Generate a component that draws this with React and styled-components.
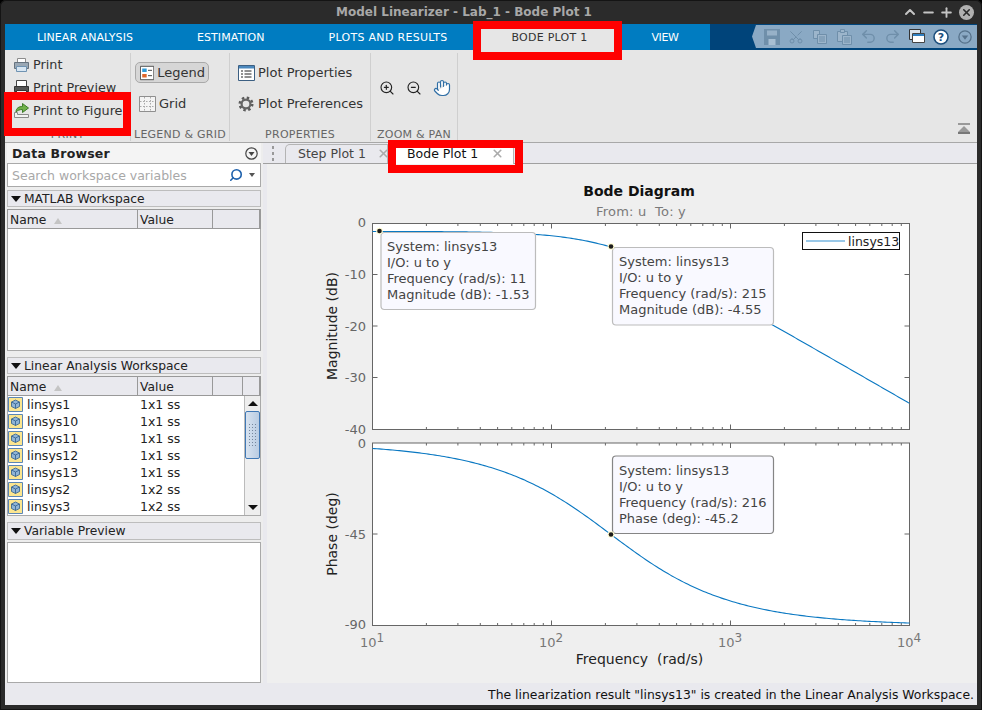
import React from 'react';
import styled, { createGlobalStyle } from 'styled-components';
import { Scissors, Undo2, Redo2, ZoomIn, ZoomOut, Hand, X, ChevronUp, Minus, Plus, Search } from 'lucide-react';

const Global = createGlobalStyle`
  html, body { margin: 0; padding: 0; background: #000; }
  body { font-family: "DejaVu Sans", sans-serif; }
  #root { width: 982px; height: 710px; overflow: hidden; }
`;

const Win = styled.div`
  position: relative;
  width: 982px;
  height: 710px;
  box-sizing: border-box;
  padding: 0 5px 5px;
  background: #2b2b2b;
  border-radius: 6px 6px 0 0;
  box-shadow: inset 0 0 0 1px #141414;
  display: flex;
  flex-direction: column;
  overflow: hidden;
`;
const TitleBar = styled.div`
  height: 24px;
  display: flex;
  align-items: center;
  justify-content: center;
  position: relative;
  color: #a8a8a8;
  font-weight: 700;
  font-size: 12px;
  padding-right: 54px;
`;
const WinControls = styled.div`
  position: absolute;
  right: 3px;
  top: 4px;
  display: flex;
  align-items: center;
  gap: 3px;
  color: #c4c4c4;
`;
const CloseDot = styled.span`
  width: 15px;
  height: 15px;
  border-radius: 50%;
  background: #b0b0b0;
  color: #2b2b2b;
  display: flex;
  align-items: center;
  justify-content: center;
  margin-left: 2px;
`;
const TabBar = styled.div`
  height: 26px;
  display: flex;
  background: #00447a;
`;
const Tab = styled.div`
  height: 100%;
  padding: 0 32px;
  display: flex;
  align-items: center;
  font-size: 11px;
  letter-spacing: ${p => p.$ls ?? 0.06}px;
  white-space: nowrap;
  background: ${p => (p.$active ? '#e6e6e6' : '#007cc1')};
  color: ${p => (p.$active ? '#333' : '#fff')};
`;
const QatSpacer = styled.div`flex: 1;`;
const Qat = styled.div`
  width: 225px;
  margin: 1px 0 2px;
  box-sizing: border-box;
  padding-left: 8px;
  display: flex;
  align-items: center;
  background: #8aa9c4;
  clip-path: polygon(4px 0, 100% 0, 100% 100%, 4px 100%, 0 50%);
`;
const QatCell = styled.span`
  width: 24.3px;
  height: 23px;
  display: flex;
  align-items: center;
  justify-content: center;
  color: #6f8faa;
`;
const Ribbon = styled.div`
  height: 93px;
  box-sizing: border-box;
  display: flex;
  background: #e6e6e6;
  border-bottom: 1px solid #a8a8a8;
  color: #333;
`;
const Group = styled.div`
  width: ${p => p.$w}px;
  flex: ${p => (p.$grow ? 1 : 'none')};
  box-sizing: border-box;
  margin: 3px 0 1px;
  border-right: ${p => (p.$grow ? 0 : '1px solid #cfcfcf')};
  display: flex;
  flex-direction: column;
`;
const GroupBody = styled.div`
  flex: 1;
  display: flex;
  flex-direction: ${p => (p.$row ? 'row' : 'column')};
  align-items: ${p => (p.$row ? 'center' : 'flex-start')};
  padding: ${p => p.$pad};
  gap: ${p => p.$gap || 0}px;
`;
const GroupLabel = styled.div`
  height: 13px;
  line-height: 13px;
  text-align: center;
  font-size: 11px;
  letter-spacing: 0.25px;
  color: #666;
  white-space: nowrap;
`;
const RibbonItem = styled.div`
  display: flex;
  align-items: center;
  height: ${p => p.$h || 23}px;
  gap: ${p => p.$gap || 3}px;
  padding-left: ${p => p.$left || 0}px;
  font-size: ${p => p.$fs || 13}px;
  white-space: nowrap;
`;
const ToggleItem = styled(RibbonItem)`
  height: 21px;
  box-sizing: border-box;
  padding: 0 3px 0 4px;
  width: 74px;
  background: #d6d6d6;
  border: 1px solid #a9a9a9;
  border-radius: 5px;
`;
const Collapse = styled.div`
  flex: 1;
  display: flex;
  justify-content: flex-end;
  align-items: flex-end;
  padding: 0 7px 7px 0;
`;
const Body = styled.div`
  flex: 1;
  min-height: 0;
  display: flex;
  background: #e9e9ee;
`;
const Left = styled.div`
  width: 258px;
  box-sizing: border-box;
  padding: 0 2px;
  display: flex;
  flex-direction: column;
  background: #ededed;
  color: #222;
`;
const BrowserHead = styled.div`
  height: 20px;
  display: flex;
  align-items: center;
  justify-content: space-between;
  padding: 0 3px 0 5px;
  background: #f4f4f4;
  font-weight: 700;
  font-size: 12.5px;
  letter-spacing: 0.2px;
`;
const SearchBox = styled.div`
  height: 24px;
  box-sizing: border-box;
  display: flex;
  align-items: center;
  padding: 0 4px;
  background: #fff;
  border: 1px solid #a9a9a9;
  color: #a8a8a8;
  font-size: 12.5px;
  margin-bottom: 3px;
`;
const SearchGlyph = styled(Search)`
  margin-left: auto;
  margin-right: 6px;
  transform: scaleX(-1);
`;
const SearchDrop = styled.span`
  width: 0;
  height: 0;
  margin-right: 1px;
  border-left: 3px solid transparent;
  border-right: 3px solid transparent;
  border-top: 4px solid #555;
`;
const SectionHead = styled.div`
  height: ${p => p.$h}px;
  box-sizing: border-box;
  display: flex;
  align-items: center;
  gap: 3px;
  padding-left: 2px;
  background: #e9e9ee;
  border: 1px solid #bdbdbd;
  font-size: 12.3px;
  margin-bottom: 2px;
`;
const Tri = styled.span`
  width: 0;
  height: 0;
  border-left: 5px solid transparent;
  border-right: 5px solid transparent;
  border-top: 6px solid #111;
  margin-left: 1px;
`;
const TableHead = styled.div`
  height: 20px;
  flex: none;
  display: grid;
  grid-template-columns: 130px 75px 1fr ${p => (p.$scroll ? '16px' : '')};
  background: #e9e9ee;
  font-size: 12.3px;
  box-sizing: border-box;
  border: 1px solid #999;
  border-width: 1px 2px 1px 1px;
`;
const HeadCell = styled.div`
  display: flex;
  align-items: center;
  gap: 8px;
  padding: 1px 0 0 2px;
  border-right: 1px solid #999;
  &:last-child { border-right: 0; }
`;
const SortMark = styled.span`
  width: 0;
  height: 0;
  border-left: 4px solid transparent;
  border-right: 4px solid transparent;
  border-bottom: 6px solid #c4c4c4;
  margin-top: 2px;
`;
const EmptyBody = styled.div`
  height: ${p => p.$h}px;
  box-sizing: border-box;
  background: #fff;
  border: 1px solid #a9a9a9;
  border-top-width: ${p => (p.$top ? 1 : 0)}px;
  margin-bottom: ${p => p.$mb || 0}px;
`;
const ListWrap = styled.div`
  height: 120px;
  box-sizing: border-box;
  display: flex;
  background: #fff;
  border-left: 1px solid #a9a9a9;
  border-right: 1px solid #a9a9a9;
  border-bottom: 1px solid #a9a9a9;
  margin-bottom: 6px;
`;
const RowList = styled.div`
  flex: 1;
  overflow: hidden;
`;
const Row = styled.div`
  height: 17px;
  display: grid;
  grid-template-columns: 130px 1fr;
  align-items: center;
  font-size: 12.5px;
`;
const NameCell = styled.span`
  display: flex;
  align-items: center;
  gap: 4px;
`;
const ValueCell = styled.span`
  padding-left: 2px;
`;
const Scroll = styled.div`
  width: 15px;
  flex: none;
  display: flex;
  flex-direction: column;
  background: #efefef;
  border-left: 1px solid #bbb;
`;
const ScrollBtn = styled.div`
  height: 15px;
  flex: none;
  display: flex;
  align-items: center;
  justify-content: center;
  background: #eee;
`;
const Arrow = styled.span`
  width: 0;
  height: 0;
  border-left: 5px solid transparent;
  border-right: 5px solid transparent;
  ${p => (p.$down ? 'border-top: 5px solid #111;' : 'border-bottom: 5px solid #111;')}
`;
const Thumb = styled.div`
  height: 48px;
  flex: none;
  box-sizing: border-box;
  display: flex;
  align-items: center;
  justify-content: center;
  border: 1px solid #3f78b5;
  border-radius: 2px;
  background: linear-gradient(90deg, #d8e3f0, #b9cce2);
`;
const ThumbDots = styled.span`
  width: 10px;
  height: 24px;
  background-image: radial-gradient(#75879d 0.8px, transparent 1px);
  background-size: 3px 3px;
`;
const Track = styled.div`flex: 1;`;
const Right = styled.div`
  flex: 1;
  min-width: 0;
  display: flex;
  flex-direction: column;
`;
const TabStrip = styled.div`
  height: 21px;
  flex: none;
  box-sizing: border-box;
  display: flex;
  align-items: flex-end;
  background: #e9e9ee;
  border-bottom: 1px solid #a0a0a0;
  font-size: 12.5px;
`;
const Grip = styled.div`
  width: 24px;
  height: 100%;
  display: flex;
  flex-direction: column;
  align-items: center;
  justify-content: center;
  gap: 3px;
  margin-left: -2px;
  span { width: 2px; height: 3px; background: #999; }
`;
const DocTab = styled.div`
  width: ${p => p.$w}px;
  height: ${p => (p.$on ? 20 : 19)}px;
  box-sizing: border-box;
  display: flex;
  align-items: center;
  justify-content: space-between;
  padding: ${p => p.$pad};
  border: 1px solid #b4b4b4;
  border-bottom: 0;
  border-left-width: ${p => (p.$on ? 0 : 1)}px;
  border-radius: ${p => (p.$on ? '0 5px 0 0' : '5px 0 0 0')};
  margin-bottom: ${p => (p.$on ? -1 : 0)}px;
  background: ${p => (p.$on ? '#fff' : '#e9e9ee')};
  color: ${p => (p.$on ? '#111' : '#444')};
  white-space: nowrap;
`;
const TabClose = styled(X)`
  margin-right: ${p => p.$mr || 0}px;
  flex: none;
`;
const PlotArea = styled.div`
  flex: 1;
  min-height: 0;
  margin-left: 4px;
  background: #efefef;
`;
const PlotSvg = styled.svg`
  display: block;
  font-family: "DejaVu Sans", sans-serif;
`;
const Status = styled.div`
  height: 22px;
  flex: none;
  display: flex;
  align-items: center;
  justify-content: flex-end;
  padding-right: 3px;
  background: #e9e9ee;
  color: #111;
  font-size: 12.4px;
  white-space: nowrap;
`;
const Highlight = styled.div`
  position: absolute;
  left: ${p => p.$x}px;
  top: ${p => p.$y}px;
  width: ${p => p.$w}px;
  height: ${p => p.$h}px;
  box-sizing: border-box;
  border: 8px solid #f00;
  pointer-events: none;
`;

/* ---------- icons ---------- */
const PrintIcon = () => (
  <svg width="17" height="16" viewBox="0 0 17 16">
    <path d="M4.500 1.500h8v4h-8z" fill="#fff" stroke="#8c8c8c" />
    <path d="M1.500 5.500h14v6h-14z" fill="#9aa8b5" stroke="#66737f" />
    <path d="M3.500 9.500h10v5h-10z" fill="#d8e6f2" stroke="#6f93b2" />
  </svg>
);
const PreviewIcon = () => (
  <svg width="17" height="16" viewBox="0 0 17 16">
    <path d="M3.500 .5h10v6h-10z" fill="#fff" stroke="#444" />
    <path d="M1.500 6.500h14v5h-14z" fill="#555" stroke="#333" />
    <path d="M3.500 10.500h10v4h-10z" fill="#eee" stroke="#333" />
  </svg>
);
const FigureIcon = () => (
  <svg width="17" height="17" viewBox="0 0 17 17">
    <path d="M1.500 10.500v5h14v-3h-11v-2z" fill="#f2f2f2" stroke="#8a8a8a" />
    <path d="M3 10C3 6 6 4.500 9.500 4.500V1.500L15.500 6 9.500 10.500V7.500C6.500 7.500 4.500 8.500 3 10z" fill="#6fb04a" stroke="#3f7d2a" />
  </svg>
);
const LegendIcon = () => (
  <svg width="16" height="16" viewBox="0 0 16 16">
    <path d="M.5.5h15v15H.5z" fill="#fff" stroke="#444" />
    <path d="M2.500 3h5v4h-5z" fill="#2f9bd8" />
    <path d="M2.500 9h5v4h-5z" fill="#e0662a" />
    <path d="M9 5h4.500M9 11h4.500" stroke="#333" />
  </svg>
);
const GridIcon = () => (
  <svg width="17" height="16" viewBox="0 0 17 16">
    <path d="M.5.5h16v15H.5z" fill="#f4f4f4" stroke="#8f8f8f" />
    <path d="M5.500 1v14M11.500 1v14M1 5.500h15M1 10.500h15" stroke="#aaa" strokeDasharray="1.500 1.500" />
  </svg>
);
const PropsIcon = () => (
  <svg width="17" height="16" viewBox="0 0 17 16">
    <path d="M.5.5h16v15H.5z" fill="#fff" stroke="#3c5f82" />
    <path d="M1 1h15v2.500H1z" fill="#4b88bd" />
    <path d="M3 6h2M3 9h2M3 12h2M6.500 6h7M6.500 9h7M6.500 12h7" stroke="#222" />
  </svg>
);
const GearIcon = () => (
  <svg width="16" height="16" viewBox="0 0 16 16">
    <circle cx="8" cy="8" r="6.200" fill="none" stroke="#5c5c5c" strokeWidth="2.600" strokeDasharray="2.400 2.470" />
    <circle cx="8" cy="8" r="4.400" fill="none" stroke="#666" strokeWidth="2.200" />
  </svg>
);
const CollapseIcon = () => (
  <svg width="12" height="11" viewBox="0 0 12 11">
    <path d="M0 0h12v2H0z" fill="#999" />
    <path d="M6 3l6 6H0z" fill="#999" />
    <path d="M0 9h12v2H0z" fill="#777" />
  </svg>
);
const SaveIcon = () => (
  <svg width="16" height="16" viewBox="0 0 16 16">
    <path d="M0 0h16v16H0z" fill="#6f8faa" />
    <path d="M3 1.500h10v5H3z" fill="#97b1c8" />
    <path d="M4.500 10h7v6h-7z" fill="#a8bfd3" />
  </svg>
);
const CopyIcon = () => (
  <svg width="14" height="14" viewBox="0 0 14 14" fill="#9cb5cb" stroke="#6f8faa">
    <path d="M.5.5h6v8h-6z" />
    <path d="M4.500 4.500h9v9h-9z" />
    <path d="M6 7h6M6 9h6M6 11h6" fill="none" />
  </svg>
);
const PasteIcon = () => (
  <svg width="15" height="16" viewBox="0 0 15 16" fill="#9cb5cb" stroke="#6f8faa">
    <path d="M.5 2.500h10v10H.5z" />
    <path d="M3.500.5h4v3h-4z" />
    <path d="M5.500 6.500h9v9h-9z" />
    <path d="M7 9h6M7 11h6M7 13h6" fill="none" />
  </svg>
);
const WindowsIcon = () => (
  <svg width="16" height="16" viewBox="0 0 16 16">
    <path d="M.5 .5h11v10H.5z" fill="#dce4ec" stroke="#333" />
    <path d="M3.500 4.500h12v9h-12z" fill="#fff" stroke="#444" />
    <path d="M4 5h11v2H4z" fill="#2f7fc0" />
  </svg>
);
const HelpIcon = () => (
  <svg width="16" height="16" viewBox="0 0 16 16">
    <circle cx="8" cy="8" r="7" fill="#fff" stroke="#1d4f7d" strokeWidth="1.600" />
    <text x="8" y="12" textAnchor="middle" fontSize="11" fontWeight="700" fontFamily="DejaVu Sans, sans-serif" fill="#1d4f7d">?</text>
  </svg>
);
const DropCircle = ({ c, s = 13 }) => (
  <svg width={s} height={s} viewBox="0 0 13 13">
    <circle cx="6.500" cy="6.500" r="5.700" fill="none" stroke={c} strokeWidth="1.200" />
    <path d="M3.500 5h6l-3 4z" fill={c} />
  </svg>
);
const VarIcon = () => (
  <svg width="15" height="15" viewBox="0 0 15 15">
    <path d="M.5.5h14v14H.5z" fill="#fbe58f" stroke="#5b86b5" />
    <path d="M7.500 3l4 2v4.500l-4 2-4-2V5z" fill="#8fb4d6" stroke="#2f5d8c" strokeWidth=".8" />
    <path d="M3.500 5l4 2 4-2M7.500 7v4.500" fill="none" stroke="#2f5d8c" strokeWidth=".8" />
  </svg>
);

/* ---------- chart ---------- */
const X0 = 372.5, X1 = 909.5, DEC = 179;
const xOf = w => X0 + (Math.log10(w) - 1) * DEC;
const M_T = 223.5, M_B = 429.5, P_T = 443, P_B = 625.5;
const WC = 214;
const magY = w => M_T + (1.53 + 10 * Math.log10(1 + (w / WC) ** 2)) * ((M_B - M_T) / 40);
const phY = w => P_T + (Math.atan(w / WC) * 180 / Math.PI) * ((P_B - P_T) / 90);
const curve = f => {
  const pts = [];
  for (let i = 0; i <= 240; i++) {
    const w = 10 ** (1 + (3 * i) / 240);
    pts.push(`${xOf(w).toFixed(2)},${f(w).toFixed(2)}`);
  }
  return 'M' + pts.join('L');
};
const minorXs = [];
for (let d = 1; d < 4; d++) for (let m = 2; m < 10; m++) minorXs.push(xOf(m * 10 ** d));
const majorXs = [100, 1000].map(xOf);

const Axes = ({ top, bottom, yTicks }) => {
  let d = '';
  minorXs.forEach(x => { d += `M${x.toFixed(1)} ${top}v2.500M${x.toFixed(1)} ${bottom}v-2.500`; });
  majorXs.forEach(x => { d += `M${x.toFixed(1)} ${top}v5M${x.toFixed(1)} ${bottom}v-5`; });
  yTicks.forEach(y => { d += `M${X0} ${y}h5M${X1} ${y}h-5`; });
  return (
    <g>
      <rect x={X0} y={top} width={X1 - X0} height={bottom - top} fill="#fff" stroke="#666" />
      <path d={d} stroke="#666" fill="none" />
    </g>
  );
};
const Tip = ({ x, y, h = 77.500, w, dark, lines }) => (
  <g>
    <rect x={x} y={y} width={w} height={h} rx="3.500" fill="#f9f9ff" stroke={dark ? '#858585' : '#bcbcbc'} strokeWidth="1.200" />
    <text fontSize="13" fill="#444">
      {lines.map((l, i) => <tspan key={i} x={Math.ceil(x + 6)} y={Math.floor(y) + 18.500 + i * 16}>{l}</tspan>)}
    </text>
  </g>
);
const Marker = ({ x, y }) => (
  <g>
    <circle cx={x} cy={y} r="3.300" fill="#fffbd0" />
    <circle cx={x} cy={y} r="2.300" fill="#1c1c1c" />
  </g>
);
const YLab = ({ y, children }) => (
  <text x="366" y={y + 4.500} textAnchor="end" fontSize="13" fill="#666">{children}</text>
);
const XLab = ({ x, sup }) => (
  <text x={x} y="647" fontSize="13" fill="#777">10<tspan dy="-5" fontSize="12">{sup}</tspan></text>
);
const Plot = () => (
  <PlotSvg width="710" height="519" viewBox="267 164 710 519">
    <text x="639" y="196" textAnchor="middle" fontSize="14" fontWeight="700" fill="#111">Bode Diagram</text>
    <text x="641" y="216" textAnchor="middle" fontSize="13" letterSpacing="0.2" fill="#7a7a7a" xmlSpace="preserve">From: u  To: y</text>

    <Axes top={M_T} bottom={M_B} yTicks={[274.5, 326, 377.5]} />
    <path d={curve(magY)} fill="none" stroke="#0a78c2" strokeWidth="1.100" />
    <Axes top={P_T} bottom={P_B} yTicks={[534]} />
    <path d={curve(phY)} fill="none" stroke="#0a78c2" strokeWidth="1.100" />

    <YLab y={222}>0</YLab>
    <YLab y={274}>-10</YLab>
    <YLab y={326}>-20</YLab>
    <YLab y={377}>-30</YLab>
    <YLab y={429}>-40</YLab>
    <YLab y={443}>0</YLab>
    <YLab y={534}>-45</YLab>
    <YLab y={624}>-90</YLab>
    <XLab x={360} sup="1" />
    <XLab x={539} sup="2" />
    <XLab x={718} sup="3" />
    <XLab x={897} sup="4" />

    <text transform="translate(337 326) rotate(-90)" textAnchor="middle" fontSize="14" fill="#222">Magnitude (dB)</text>
    <text transform="translate(337 534) rotate(-90)" textAnchor="middle" fontSize="14" fill="#222">Phase (deg)</text>
    <text x="639.500" y="664" textAnchor="middle" fontSize="14" fill="#222" xmlSpace="preserve">Frequency  (rad/s)</text>

    <rect x="802.500" y="232.500" width="97" height="17" fill="#fff" stroke="#111" />
    <path d="M806 241h39" stroke="#77b6e0" strokeWidth="1.500" />
    <text x="848" y="245.500" fontSize="12.500" fill="#222">linsys13</text>

    <Tip x={381} y={232.500} h={77} w={154.500} lines={['System: linsys13', 'I/O: u to y', 'Frequency (rad/s): 11', 'Magnitude (dB): -1.53']} />
    <Tip x={612.500} y={247.500} w={161} lines={['System: linsys13', 'I/O: u to y', 'Frequency (rad/s): 215', 'Magnitude (dB): -4.55']} />
    <Tip x={612.500} y={456} w={161} dark lines={['System: linsys13', 'I/O: u to y', 'Frequency (rad/s): 216', 'Phase (deg): -45.2']} />
    <Marker x={379.500} y={231} />
    <Marker x={611} y={246.500} />
    <Marker x={611} y={534.500} />
  </PlotSvg>
);

const vars = [
  ['linsys1', '1x1 ss'], ['linsys10', '1x1 ss'], ['linsys11', '1x1 ss'], ['linsys12', '1x1 ss'],
  ['linsys13', '1x1 ss'], ['linsys2', '1x2 ss'], ['linsys3', '1x2 ss'],
];

export default function App() {
  return (
    <Win>
      <Global />
      <TitleBar>
        Model Linearizer - Lab_1 - Bode Plot 1
        <WinControls>
          <ChevronUp size={16} strokeWidth={3} />
          <Minus size={15} strokeWidth={3} />
          <Plus size={15} strokeWidth={3} />
          <CloseDot><X size={11} strokeWidth={3.500} /></CloseDot>
        </WinControls>
      </TitleBar>
      <TabBar>
        <Tab>LINEAR ANALYSIS</Tab>
        <Tab>ESTIMATION</Tab>
        <Tab $ls={0.3}>PLOTS AND RESULTS</Tab>
        <Tab $active $ls={0.25}>BODE PLOT 1</Tab>
        <Tab $ls={-0.4}>VIEW</Tab>
        <QatSpacer />
        <Qat>
          <QatCell><SaveIcon /></QatCell>
          <QatCell><Scissors size={16} strokeWidth={1.500} style={{ transform: 'rotate(-90deg)' }} /></QatCell>
          <QatCell><CopyIcon /></QatCell>
          <QatCell><PasteIcon /></QatCell>
          <QatCell><Undo2 size={17} strokeWidth={2} /></QatCell>
          <QatCell><Redo2 size={17} strokeWidth={2} /></QatCell>
          <QatCell><WindowsIcon /></QatCell>
          <QatCell><HelpIcon /></QatCell>
          <QatCell><DropCircle c="#55718a" s={14} /></QatCell>
        </Qat>
      </TabBar>
      <Ribbon>
        <Group $w={126}>
          <GroupBody $pad="0 0 0 8px">
            <RibbonItem $fs={12.8}><PrintIcon />Print</RibbonItem>
            <RibbonItem $fs={12.8}><PreviewIcon />Print Preview</RibbonItem>
            <RibbonItem $fs={12.8}><FigureIcon />Print to Figure</RibbonItem>
          </GroupBody>
          <GroupLabel>PRINT</GroupLabel>
        </Group>
        <Group $w={99}>
          <GroupBody $pad="9px 0 0 4px" $gap={10}>
            <ToggleItem $gap={3}><LegendIcon />Legend</ToggleItem>
            <RibbonItem $gap={3} $h={21} $left={4}><GridIcon />Grid</RibbonItem>
          </GroupBody>
          <GroupLabel>LEGEND &amp; GRID</GroupLabel>
        </Group>
        <Group $w={141}>
          <GroupBody $pad="9px 0 0 8px" $gap={10}>
            <RibbonItem $gap={3} $h={21}><PropsIcon />Plot Properties</RibbonItem>
            <RibbonItem $gap={4} $h={21}><GearIcon />Plot Preferences</RibbonItem>
          </GroupBody>
          <GroupLabel>PROPERTIES</GroupLabel>
        </Group>
        <Group $w={87}>
          <GroupBody $row $pad="0 0 5px 8px" $gap={11}>
            <ZoomIn size={16} color="#222" strokeWidth={1.700} />
            <ZoomOut size={16} color="#222" strokeWidth={1.700} />
            <Hand size={18} color="#2f6ea5" fill="#fff" strokeWidth={1.600} />
          </GroupBody>
          <GroupLabel>ZOOM &amp; PAN</GroupLabel>
        </Group>
        <Group $grow>
          <Collapse><CollapseIcon /></Collapse>
        </Group>
      </Ribbon>
      <Body>
        <Left>
          <BrowserHead>Data Browser<DropCircle c="#444" /></BrowserHead>
          <SearchBox>
            Search workspace variables
            <SearchGlyph size={14} color="#1f62ad" strokeWidth={2.800} />
            <SearchDrop />
          </SearchBox>
          <SectionHead $h={17}><Tri />MATLAB Workspace</SectionHead>
          <TableHead>
            <HeadCell>Name<SortMark /></HeadCell>
            <HeadCell>Value</HeadCell>
            <HeadCell />
          </TableHead>
          <EmptyBody $h={122} $mb={6} />
          <SectionHead $h={17}><Tri />Linear Analysis Workspace</SectionHead>
          <TableHead $scroll>
            <HeadCell>Name<SortMark /></HeadCell>
            <HeadCell>Value</HeadCell>
            <HeadCell />
            <HeadCell />
          </TableHead>
          <ListWrap>
            <RowList>
              {vars.map(([n, v]) => (
                <Row key={n}>
                  <NameCell><VarIcon />{n}</NameCell>
                  <ValueCell>{v}</ValueCell>
                </Row>
              ))}
            </RowList>
            <Scroll>
              <ScrollBtn><Arrow /></ScrollBtn>
              <Thumb><ThumbDots /></Thumb>
              <Track />
              <ScrollBtn><Arrow $down /></ScrollBtn>
            </Scroll>
          </ListWrap>
          <SectionHead $h={18}><Tri />Variable Preview</SectionHead>
          <EmptyBody $h={141} $top />
        </Left>
        <Right>
          <TabStrip>
            <Grip><span /><span /><span /></Grip>
            <DocTab $w={103} $pad="0 0 2px 12px">
              Step Plot 1
              <TabClose size={13} color="#aaa" strokeWidth={3} $mr={-3} />
            </DocTab>
            <DocTab $on $w={126} $pad="0 9px 3px 19px">
              Bode Plot 1
              <TabClose size={13} color="#aaa" strokeWidth={3} />
            </DocTab>
          </TabStrip>
          <PlotArea><Plot /></PlotArea>
        </Right>
      </Body>
      <Status>The linearization result "linsys13" is created in the Linear Analysis Workspace.</Status>
      <Highlight $x={473} $y={21} $w={149} $h={39} />
      <Highlight $x={4} $y={92} $w={127} $h={44} />
      <Highlight $x={388} $y={140} $w={135} $h={33} />
    </Win>
  );
}
